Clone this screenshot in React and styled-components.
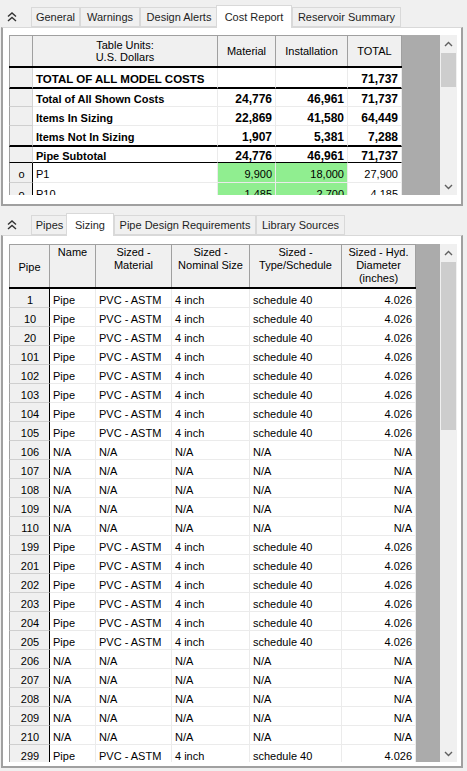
import React from 'react';
import styled, { createGlobalStyle } from 'styled-components';

const GlobalStyle = createGlobalStyle`
  * { box-sizing: border-box; }
  html, body { margin: 0; padding: 0; background: #f0f0f0; }
  body {
    font-family: "Liberation Sans", Arial, sans-serif;
    font-size: 11px;
    color: #000;
  }
`;

const TOP_COLS = '24px 185px 58px 72px 54px';
const LOW_COLS = '41px 46px 76px 78px 92px 74px';

const LINES = {
  none: 'none',
  grid: '1px solid #ebebeb',
  thin: '1px solid #000',
  thick: '2px solid #000',
};

const Screen = styled.div`
  width: 467px;
  height: 771px;
  overflow: hidden;
  display: flex;
  flex-direction: column;
  gap: 2px;
  padding-left: 1px;
`;

const Section = styled.section`
  width: 462px;
  display: flex;
  flex-direction: column;
`;

const TabStrip = styled.div`
  height: 27px;
  display: flex;
  align-items: flex-end;
`;

const Collapse = styled.div`
  width: 30px;
  align-self: stretch;
  padding: 12px 0 0 6px;

  svg { display: block; }
`;

const Tab = styled.div`
  position: relative;
  z-index: ${p => (p.$active ? 1 : 0)};
  width: ${p => p.$w}px;
  height: ${p => (p.$active ? 23 : 20)}px;
  margin: ${p => (p.$active ? '0 0 -1px -2px' : '0')};
  display: flex;
  align-items: center;
  justify-content: center;
  border: 1px solid #d9d9d9;
  border-bottom: ${p => (p.$active ? 'none' : '1px solid #d9d9d9')};
  background: ${p => (p.$active ? '#fff' : '#f0f0f0')};
  color: #1e1e1e;
  white-space: nowrap;
`;

const TabPage = styled.div`
  background: #fff;
  border-top: 1px solid #d9d9d9;
  border-left: 2px solid #a0a0a0;
  border-right: 2px solid #a0a0a0;
  border-bottom: 2px solid #a0a0a0;
  padding: ${p => p.$pad};
`;

const Grid = styled.div`
  height: ${p => p.$h}px;
  display: flex;
  background: #ababab;
`;

const Table = styled.div`
  width: ${p => p.$w}px;
  flex: none;
  overflow: hidden;
  background: #fff;
`;

const Workspace = styled.div`
  flex: 1;
`;

const ScrollBar = styled.div`
  width: 17px;
  flex: none;
  display: flex;
  flex-direction: column;
  background: #f0f0f0;
`;

const ScrollButton = styled.div`
  height: 17px;
  flex: none;
  display: flex;
  align-items: center;
  justify-content: center;
`;

const ScrollGap = styled.div`
  height: ${p => p.$h}px;
  flex: none;
`;

const Thumb = styled.div`
  height: ${p => p.$h}px;
  flex: none;
  margin: 0 1px;
  background: #cdcdcd;
`;

const Track = styled.div`
  flex: 1;
`;

const HeaderRow = styled.div`
  display: grid;
  grid-template-columns: ${p => p.$cols};
  height: ${p => p.$h}px;
  border-top: 1px solid #a0a0a0;
  border-bottom: 2px solid #000;
`;

const HeadCell = styled.div`
  display: flex;
  flex-direction: column;
  align-items: center;
  justify-content: ${p => (p.$top ? 'flex-start' : 'center')};
  padding-top: ${p => p.$pt || 0}px;
  line-height: ${p => p.$lh || 13}px;
  text-align: center;
  white-space: pre-line;
  background: #f0f0f0;
  border-right: 1px solid #a0a0a0;
  border-left: ${p => (p.$first ? '1px solid #a0a0a0' : 'none')};
`;

const Row = styled.div`
  display: grid;
  grid-template-columns: ${p => p.$cols};
  height: ${p => p.$h}px;
`;

const Cell = styled.div`
  display: flex;
  align-items: center;
  justify-content: ${p => (p.$right ? 'flex-end' : 'flex-start')};
  padding: 3px 3px 0;
  background: ${p => p.$bg || 'transparent'};
  border-right: 1px solid ${p => p.$edge || '#ebebeb'};
  border-bottom: ${p => LINES[p.$line || 'grid']};
  font-weight: ${p => (p.$bold ? 700 : 400)};
  font-size: ${p => p.$size || 11}px;
  white-space: nowrap;
  overflow: hidden;
`;

const RowHead = styled.div`
  display: flex;
  align-items: center;
  justify-content: center;
  padding: 3px 0 0 1px;
  background: #f0f0f0;
  border-left: 1px solid #a0a0a0;
  border-right: 1px solid ${p => (p.$dark ? '#000' : '#d4d4d4')};
  border-bottom: ${p => (p.$line === 'grid' ? '1px solid #cfcfcf' : LINES[p.$line])};
`;

const Chevrons = () => (
  <svg width="10" height="10" viewBox="0 0 10 10">
    <polyline points="1,4.5 5,1 9,4.5" fill="none" stroke="#333" strokeWidth="1.4" />
    <polyline points="1,9 5,5.5 9,9" fill="none" stroke="#333" strokeWidth="1.4" />
  </svg>
);

const Arrow = ({ down }) => (
  <svg width="9" height="6" viewBox="0 0 9 6">
    <polyline
      points={down ? '1,1 4.5,4.5 8,1' : '1,5 4.5,1.5 8,5'}
      fill="none"
      stroke="#606060"
      strokeWidth="1.4"
    />
  </svg>
);

const Scroll = ({ thumb }) => (
  <ScrollBar>
    <ScrollButton><Arrow /></ScrollButton>
    <ScrollGap $h={1} />
    <Thumb $h={thumb} />
    <Track />
    <ScrollButton><Arrow down /></ScrollButton>
  </ScrollBar>
);

const Tabs = ({ tabs }) => (
  <TabStrip>
    <Collapse><Chevrons /></Collapse>
    {tabs.map(t => (
      <Tab key={t.label} $w={t.w} $active={t.active}>{t.label}</Tab>
    ))}
  </TabStrip>
);

const costRows = [
  { label: 'TOTAL OF ALL MODEL COSTS', t: '71,737', h: 21, line: 'thick', size: 11.5 },
  { label: 'Total of All Shown Costs', m: '24,776', i: '46,961', t: '71,737', h: 18, line: 'grid' },
  { label: 'Items In Sizing', m: '22,869', i: '41,580', t: '64,449', h: 19, line: 'grid' },
  { label: 'Items Not In Sizing', m: '1,907', i: '5,381', t: '7,288', h: 21, line: 'thick' },
  { label: 'Pipe Subtotal', m: '24,776', i: '46,961', t: '71,737', h: 16, line: 'thin' },
  { label: 'P1', m: '9,900', i: '18,000', t: '27,900', h: 20, line: 'grid', item: true },
  { label: 'P10', m: '1,485', i: '2,700', t: '4,185', h: 20, line: 'grid', item: true },
];

const PIPE = ['Pipe', 'PVC - ASTM', '4 inch', 'schedule 40', '4.026'];
const NA = ['N/A', 'N/A', 'N/A', 'N/A', 'N/A'];

const sizingRows = [
  [1, PIPE], [10, PIPE], [20, PIPE], [101, PIPE], [102, PIPE], [103, PIPE], [104, PIPE], [105, PIPE],
  [106, NA], [107, NA], [108, NA], [109, NA], [110, NA],
  [199, PIPE], [201, PIPE], [202, PIPE], [203, PIPE], [204, PIPE], [205, PIPE],
  [206, NA], [207, NA], [208, NA], [209, NA], [210, NA],
  [299, PIPE],
];

const CostTable = () => (
  <Table $w={393}>
    <HeaderRow $cols={TOP_COLS} $h={33}>
      <HeadCell $first />
      <HeadCell $lh={12}>{'Table Units:\nU.S. Dollars'}</HeadCell>
      <HeadCell>Material</HeadCell>
      <HeadCell>Installation</HeadCell>
      <HeadCell>TOTAL</HeadCell>
    </HeaderRow>
    {costRows.map(r => {
      const bold = !r.item;
      const green = r.item ? '#90ee90' : undefined;
      return (
        <Row key={r.label} $cols={TOP_COLS} $h={r.h}>
          <RowHead $line={r.line} $dark={r.item}>{r.item ? 'o' : ''}</RowHead>
          <Cell $line={r.line} $bold={bold} $size={r.size || 11}>{r.label}</Cell>
          <Cell $line={r.line} $bold={bold} $size={bold ? 12 : 11} $bg={green} $right>{r.m}</Cell>
          <Cell $line={r.line} $bold={bold} $size={bold ? 12 : 11} $bg={green} $right>{r.i}</Cell>
          <Cell $line={r.line} $bold={bold} $size={bold ? 12 : 11} $right>{r.t}</Cell>
        </Row>
      );
    })}
  </Table>
);

const SizingTable = () => (
  <Table $w={407}>
    <HeaderRow $cols={LOW_COLS} $h={45}>
      <HeadCell $first $pt={3}>Pipe</HeadCell>
      <HeadCell $top $pt={1}>Name</HeadCell>
      <HeadCell $top $pt={1}>{'Sized -\nMaterial'}</HeadCell>
      <HeadCell $top $pt={1}>{'Sized -\nNominal Size'}</HeadCell>
      <HeadCell $top $pt={1}>{'Sized -\nType/Schedule'}</HeadCell>
      <HeadCell $top $pt={1}>{'Sized - Hyd.\nDiameter\n(inches)'}</HeadCell>
    </HeaderRow>
    {sizingRows.map(([id, vals]) => (
      <Row key={id} $cols={LOW_COLS} $h={19}>
        <RowHead $line="grid" $dark>{id}</RowHead>
        <Cell>{vals[0]}</Cell>
        <Cell>{vals[1]}</Cell>
        <Cell>{vals[2]}</Cell>
        <Cell>{vals[3]}</Cell>
        <Cell $right>{vals[4]}</Cell>
      </Row>
    ))}
  </Table>
);

export default function App() {
  return (
    <>
      <GlobalStyle />
      <Screen>
        <Section>
          <Tabs
            tabs={[
              { label: 'General', w: 49 },
              { label: 'Warnings', w: 60 },
              { label: 'Design Alerts', w: 78 },
              { label: 'Cost Report', w: 76, active: true },
              { label: 'Reservoir Summary', w: 109 },
            ]}
          />
          <TabPage $pad="7px 4px 9px 6px">
            <Grid $h={160}>
              <CostTable />
              <Workspace />
              <Scroll thumb={34} />
            </Grid>
          </TabPage>
        </Section>
        <Section>
          <Tabs
            tabs={[
              { label: 'Pipes', w: 37 },
              { label: 'Sizing', w: 48, active: true },
              { label: 'Pipe Design Requirements', w: 142 },
              { label: 'Library Sources', w: 89 },
            ]}
          />
          <TabPage $pad="8px 4px 4px 6px">
            <Grid $h={518}>
              <SizingTable />
              <Workspace />
              <Scroll thumb={168} />
            </Grid>
          </TabPage>
        </Section>
      </Screen>
    </>
  );
}
